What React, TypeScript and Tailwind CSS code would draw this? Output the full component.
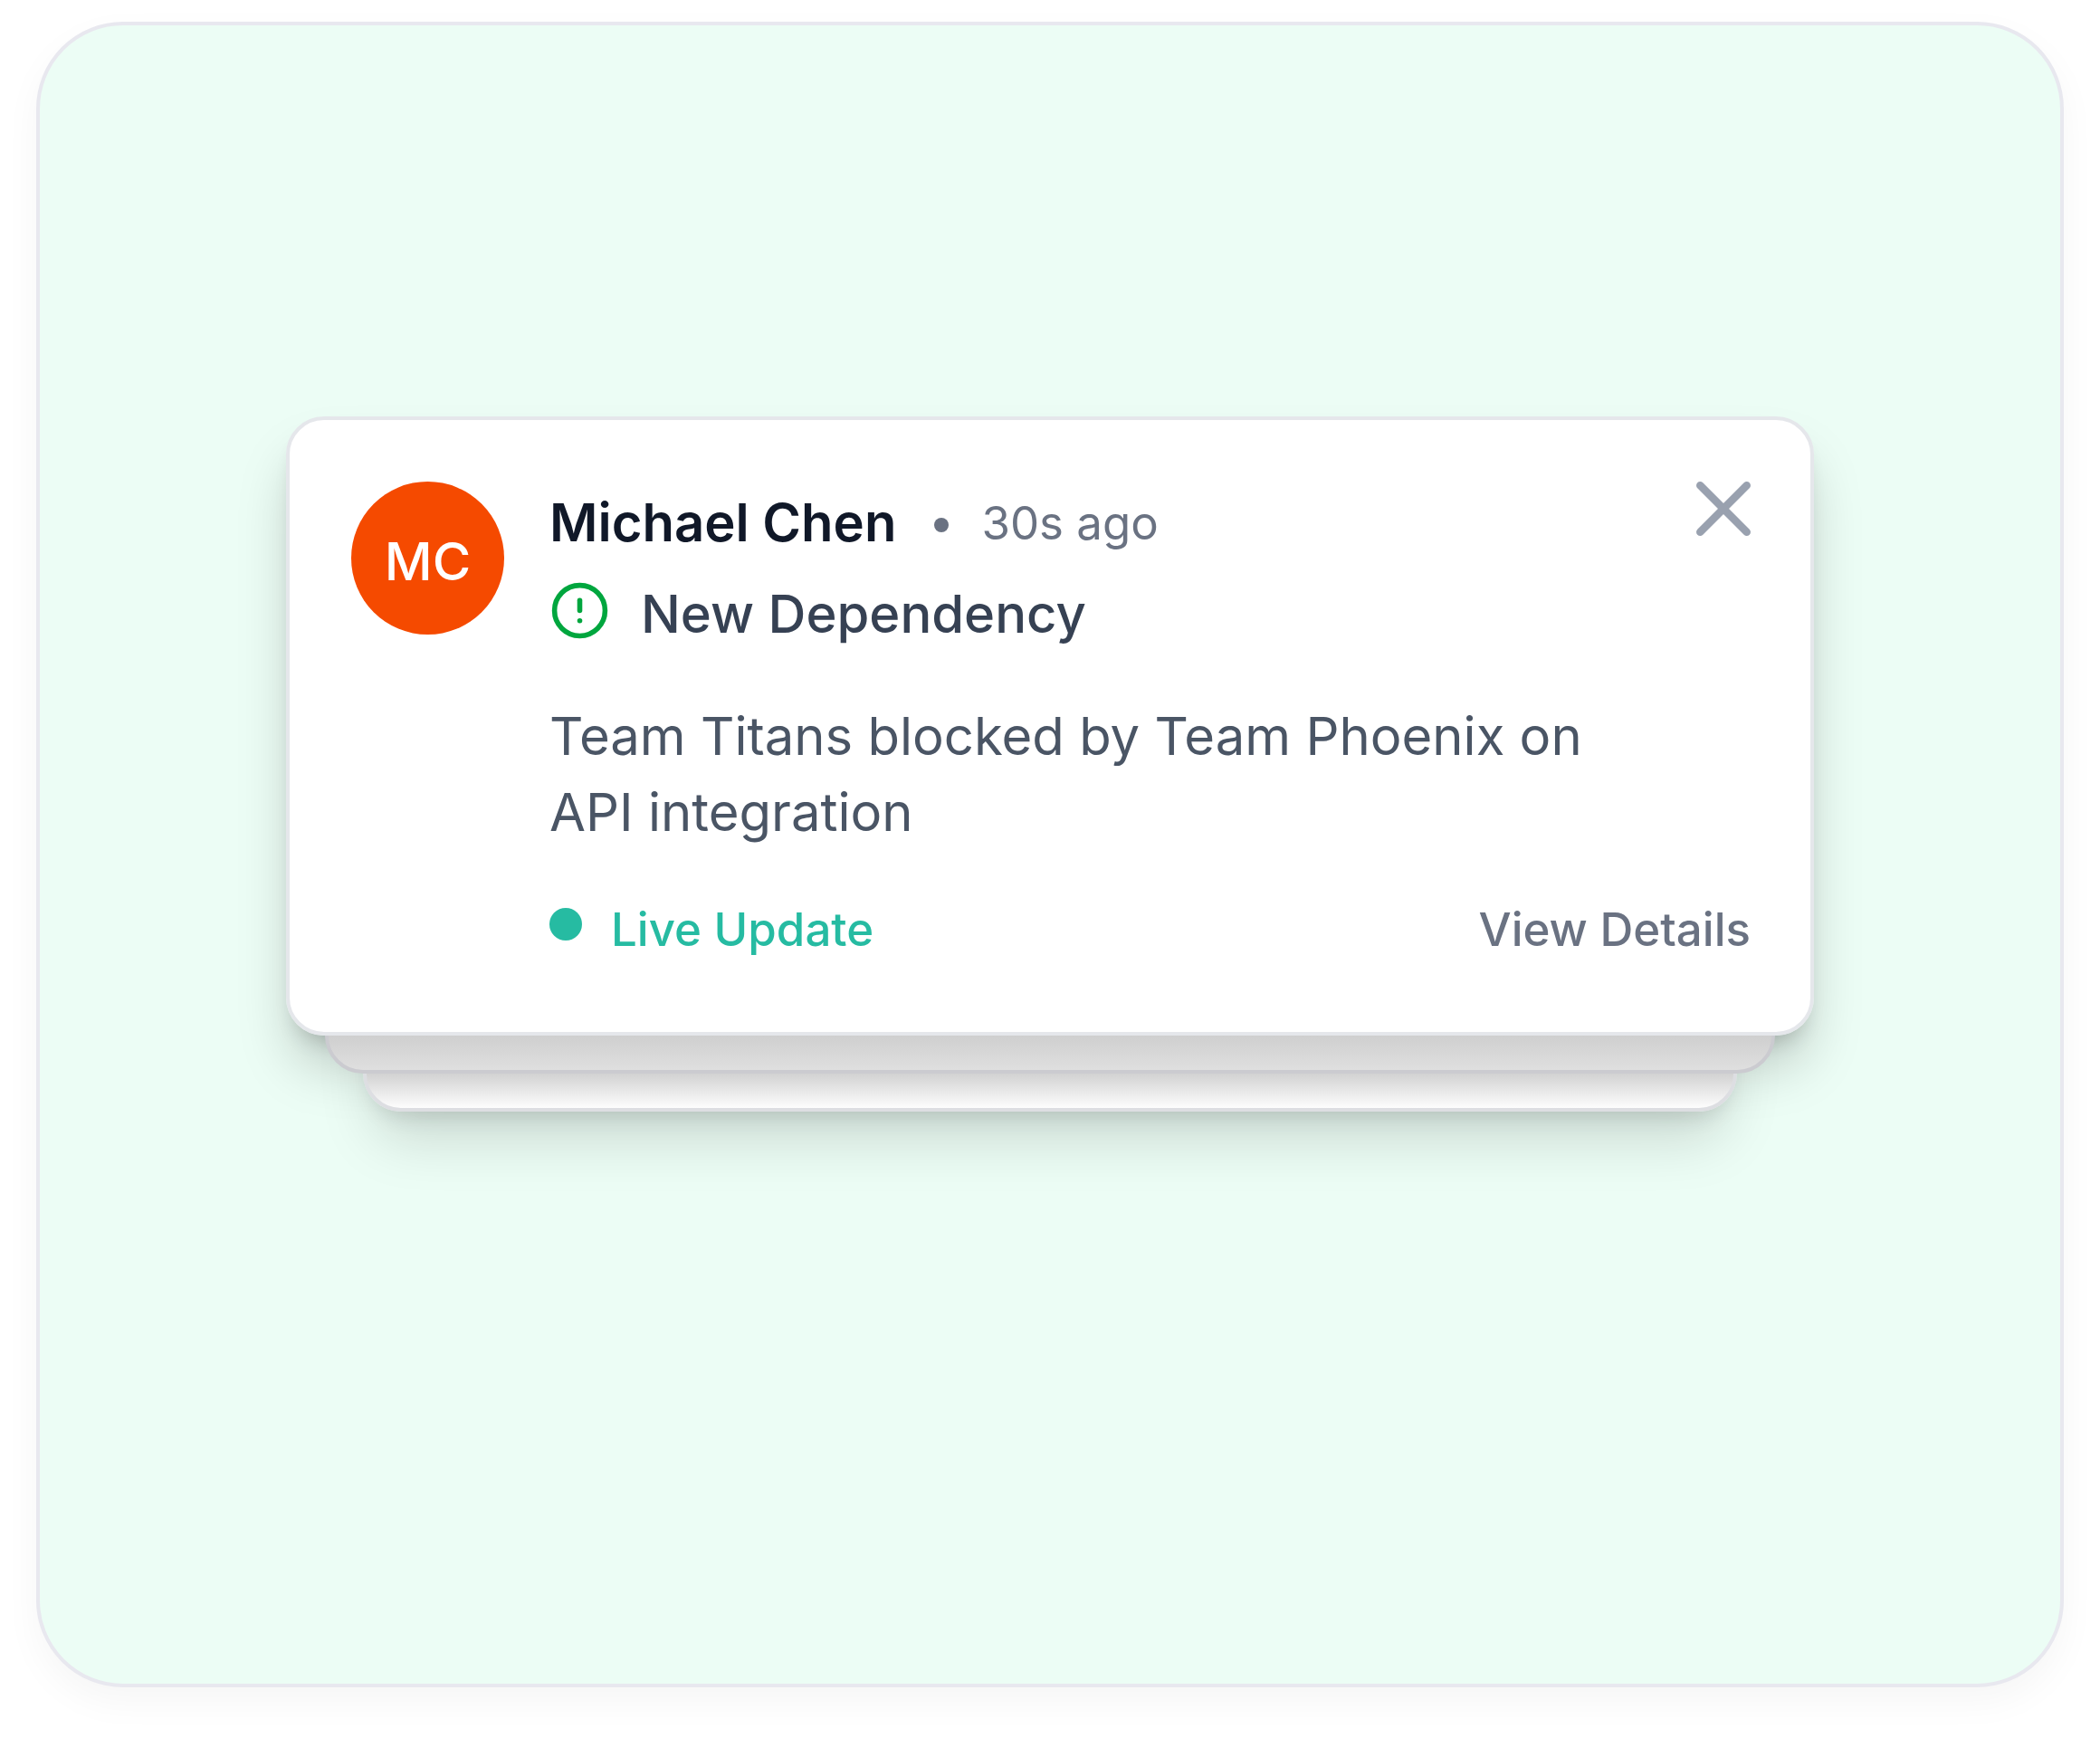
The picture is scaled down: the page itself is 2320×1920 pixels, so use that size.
import React from "react";
import { CircleAlert } from "lucide-react";

interface Notification {
  initials: string;
  name: string;
  time: string;
  title: string;
  message: string;
}

const notification: Notification = {
  initials: "MC",
  name: "Michael Chen",
  time: "30s ago",
  title: "New Dependency",
  message: "Team Titans blocked by Team Phoenix on API integration",
};

const CloseIcon: React.FC = () => (
  <svg
    viewBox="5 5 14 14"
    fill="none"
    stroke="currentColor"
    strokeWidth="2"
    strokeLinecap="round"
    strokeLinejoin="round"
    className="size-[60px]"
  >
    <path d="M18 6 6 18" />
    <path d="m6 6 12 12" />
  </svg>
);

const Avatar: React.FC<{ initials: string }> = ({ initials }) => (
  <div className="flex size-[169px] shrink-0 items-center justify-center rounded-full bg-[#f54a00] pt-1.5 text-[58px] leading-[84px] font-medium text-white">
    {initials}
  </div>
);

const NotificationCard: React.FC<Notification> = ({
  initials,
  name,
  time,
  title,
  message,
}) => (
  <article className="relative z-20 flex items-start gap-[50px] rounded-[42px] border-4 border-gray-200 bg-white pt-[68px] pr-[66px] pb-20 pl-[68px]">
    <Avatar initials={initials} />
    <div className="flex-1">
      <div className="flex items-start justify-between">
        <div className="flex items-center pt-0.5 leading-[84px]">
          <h2 className="text-[58px] font-semibold text-gray-900">{name}</h2>
          <span className="flex items-center pt-0.5 text-[51px] text-gray-500">
            <span className="mt-1 mr-9 ml-[42px] size-4 rounded-full bg-gray-500" />
            <time>{time}</time>
          </span>
        </div>
        <button type="button" aria-label="Close" className="text-gray-400">
          <CloseIcon />
        </button>
      </div>
      <div className="mt-4 flex items-start gap-[34px]">
        <CircleAlert className="mt-[5px] size-[67px] text-[#00a63e]" />
        <h3 className="text-[58px] leading-[84px] font-medium text-gray-700">
          {title}
        </h3>
      </div>
      <p className="mt-[51px] max-w-[1200px] text-[58px] leading-[84px] text-gray-600">
        {message}
      </p>
      <div className="mt-[54px] flex items-start justify-between text-[51px] leading-[67px] font-medium">
        <span className="flex items-start gap-8 text-[#26bba2]">
          <span className="mt-2.5 size-9 rounded-full bg-[#26bba2]" />
          Live Update
        </span>
        <a href="#details" className="text-gray-500">
          View Details
        </a>
      </div>
    </div>
  </article>
);

export default function App() {
  return (
    <main className="flex min-h-screen bg-white px-10 pt-6 pb-14 font-[Inter,sans-serif]">
      <section className="flex-1 rounded-[96px] border-4 border-[#e8e8ef] bg-[#ecfdf5] px-6 pt-[432px] shadow-[0_16px_40px_rgba(0,0,0,0.04)]">
        <div className="relative isolate mx-auto max-w-[1688px] rounded-[42px] shadow-[0_40px_63px_-10px_rgba(0,0,0,0.22),0_17px_25px_-13px_rgba(0,0,0,0.2)]">
          <NotificationCard {...notification} />
          {/* cards waiting behind the front one */}
          <div className="absolute inset-x-[43px] top-[42px] -bottom-[42px] z-10 rounded-[42px] border-4 border-[#cbcbd0] bg-[linear-gradient(to_top,#dfdfdf,#cfcfcf_38px)]" />
          <div className="absolute inset-x-[85px] top-[84px] -bottom-[84px] rounded-[42px] border-4 border-[#dddee2] bg-[linear-gradient(to_top,#fdfdfd,#d2d2d2_38px)] shadow-[0_42px_63px_-13px_rgba(0,0,0,0.15),0_17px_25px_-13px_rgba(0,0,0,0.12)]" />
        </div>
      </section>
    </main>
  );
}
